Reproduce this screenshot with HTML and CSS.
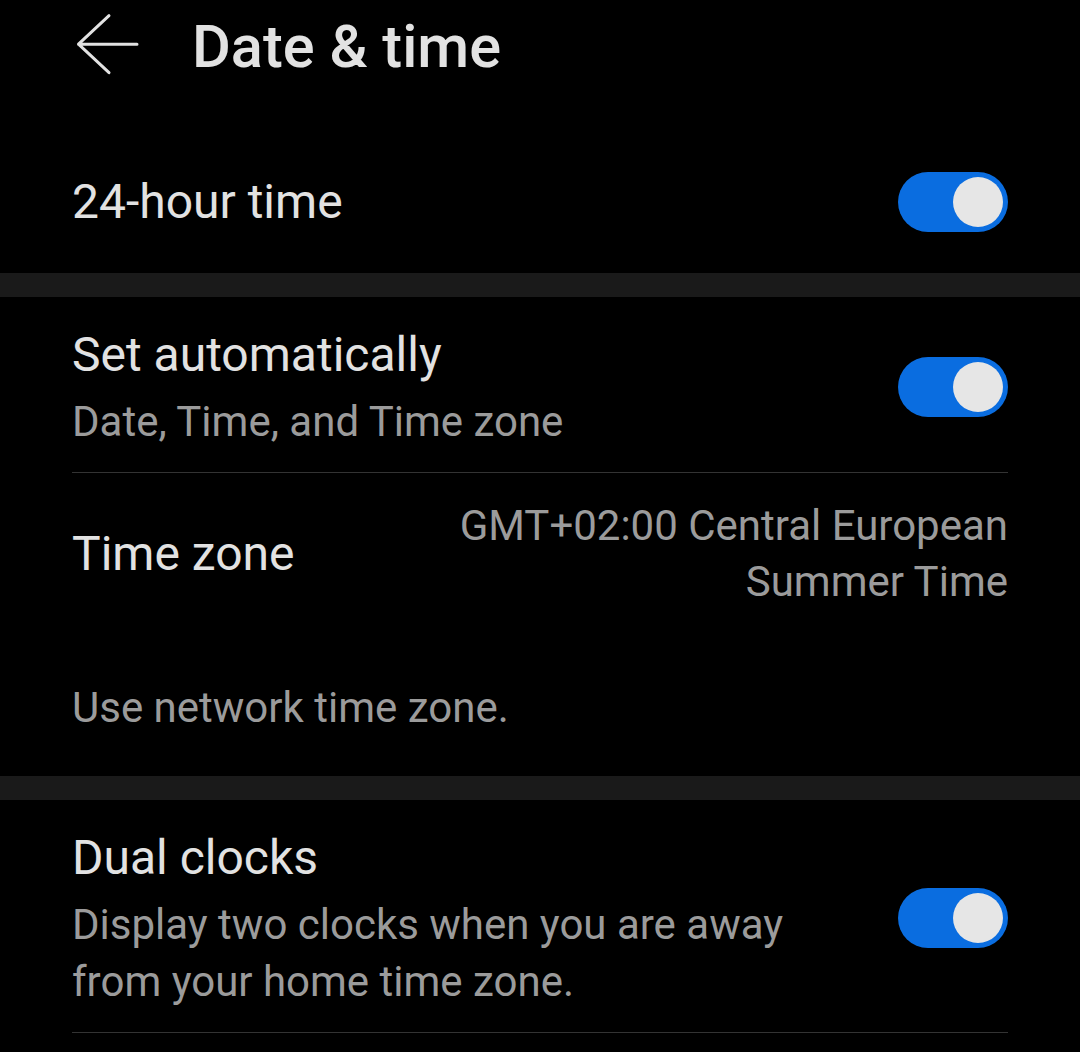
FILE: index.html
```html
<!DOCTYPE html>
<html lang="en">
<head>
  <meta charset="UTF-8">
  <meta name="viewport" content="width=device-width, initial-scale=1.0">
  <link rel="stylesheet" href="styles.css">
</head>
<body>
  <header class="top-bar">
    <svg class="back" width="64" height="70" viewBox="0 0 64 70">
      <path d="M61 32.2H2.5M33 3.7L2.5 32.2L33 60.7" />
    </svg>
    <h1 class="page-title">Date &amp; time</h1>
  </header>

  <section class="group first">
    <div class="row">
      <div class="text">
        <div class="title">24-hour time</div>
      </div>
      <div class="switch on"><span class="knob"></span></div>
    </div>
  </section>

  <div class="band"></div>

  <section class="group">
    <div class="row divided">
      <div class="text">
        <div class="title">Set automatically</div>
        <div class="summary">Date, Time, and Time zone</div>
      </div>
      <div class="switch on"><span class="knob"></span></div>
    </div>
    <div class="row zone">
      <div class="title">Time zone</div>
      <div class="value">GMT+02:00 Central European Summer Time</div>
    </div>
    <p class="hint">Use network time zone.</p>
  </section>

  <div class="band"></div>

  <section class="group">
    <div class="row divided">
      <div class="text narrow">
        <div class="title">Dual clocks</div>
        <div class="summary">Display two clocks when you are away from your home time zone.</div>
      </div>
      <div class="switch on"><span class="knob"></span></div>
    </div>
  </section>
</body>
</html>
```

FILE: styles.css
```css
body {
  margin: 0;
  background-color: #000;
  color: #e2e2e2;
  font-family: Roboto, "Noto Sans", "Liberation Sans", sans-serif;
}
.top-bar {
  display: flex;
  align-items: center;
  height: 94px;
  padding-left: 76px;
}
.back {
  flex: none;
}
.back path {
  fill: none;
  stroke: #e2e2e2;
  stroke-width: 3;
  stroke-linecap: round;
  stroke-linejoin: round;
}
.page-title {
  margin: 0 0 0 52px;
  font-size: 59.5px;
  font-weight: 500;
  line-height: 94px;
}
.group {
  padding: 0 72px 0 72px;
}
.group.first {
  padding-top: 36px;
}
.band {
  height: 24px;
  background-color: #1a1a1a;
}
.row {
  display: flex;
  align-items: center;
  justify-content: space-between;
}
.group.first .row {
  height: 143px;
}
.row.divided {
  padding: 26px 0 22px;
  border-bottom: 1px solid #333;
}
.text {
  flex: 1;
  padding-right: 60px;
}
.text.narrow {
  padding-right: 80px;
}
.title {
  font-size: 48px;
  line-height: 64px;
}
.summary {
  margin-top: 6px;
  font-size: 42px;
  line-height: 57px;
  color: #9b9b9b;
}
.row.zone {
  padding: 25px 0;
}
.value {
  max-width: 590px;
  text-align: right;
  font-size: 42px;
  line-height: 56px;
  color: #9b9b9b;
}
.hint {
  margin: 0;
  padding: 45px 0 40px;
  font-size: 42px;
  line-height: 56px;
  color: #9b9b9b;
}
.switch {
  flex: none;
  display: flex;
  align-items: center;
  width: 110px;
  height: 60px;
  border-radius: 30px;
  background-color: #0a6de0;
  box-sizing: border-box;
  padding: 0 5px;
}
.switch.on {
  justify-content: flex-end;
}
.knob {
  width: 50px;
  height: 50px;
  border-radius: 50%;
  background-color: #e6e6e6;
}
```
